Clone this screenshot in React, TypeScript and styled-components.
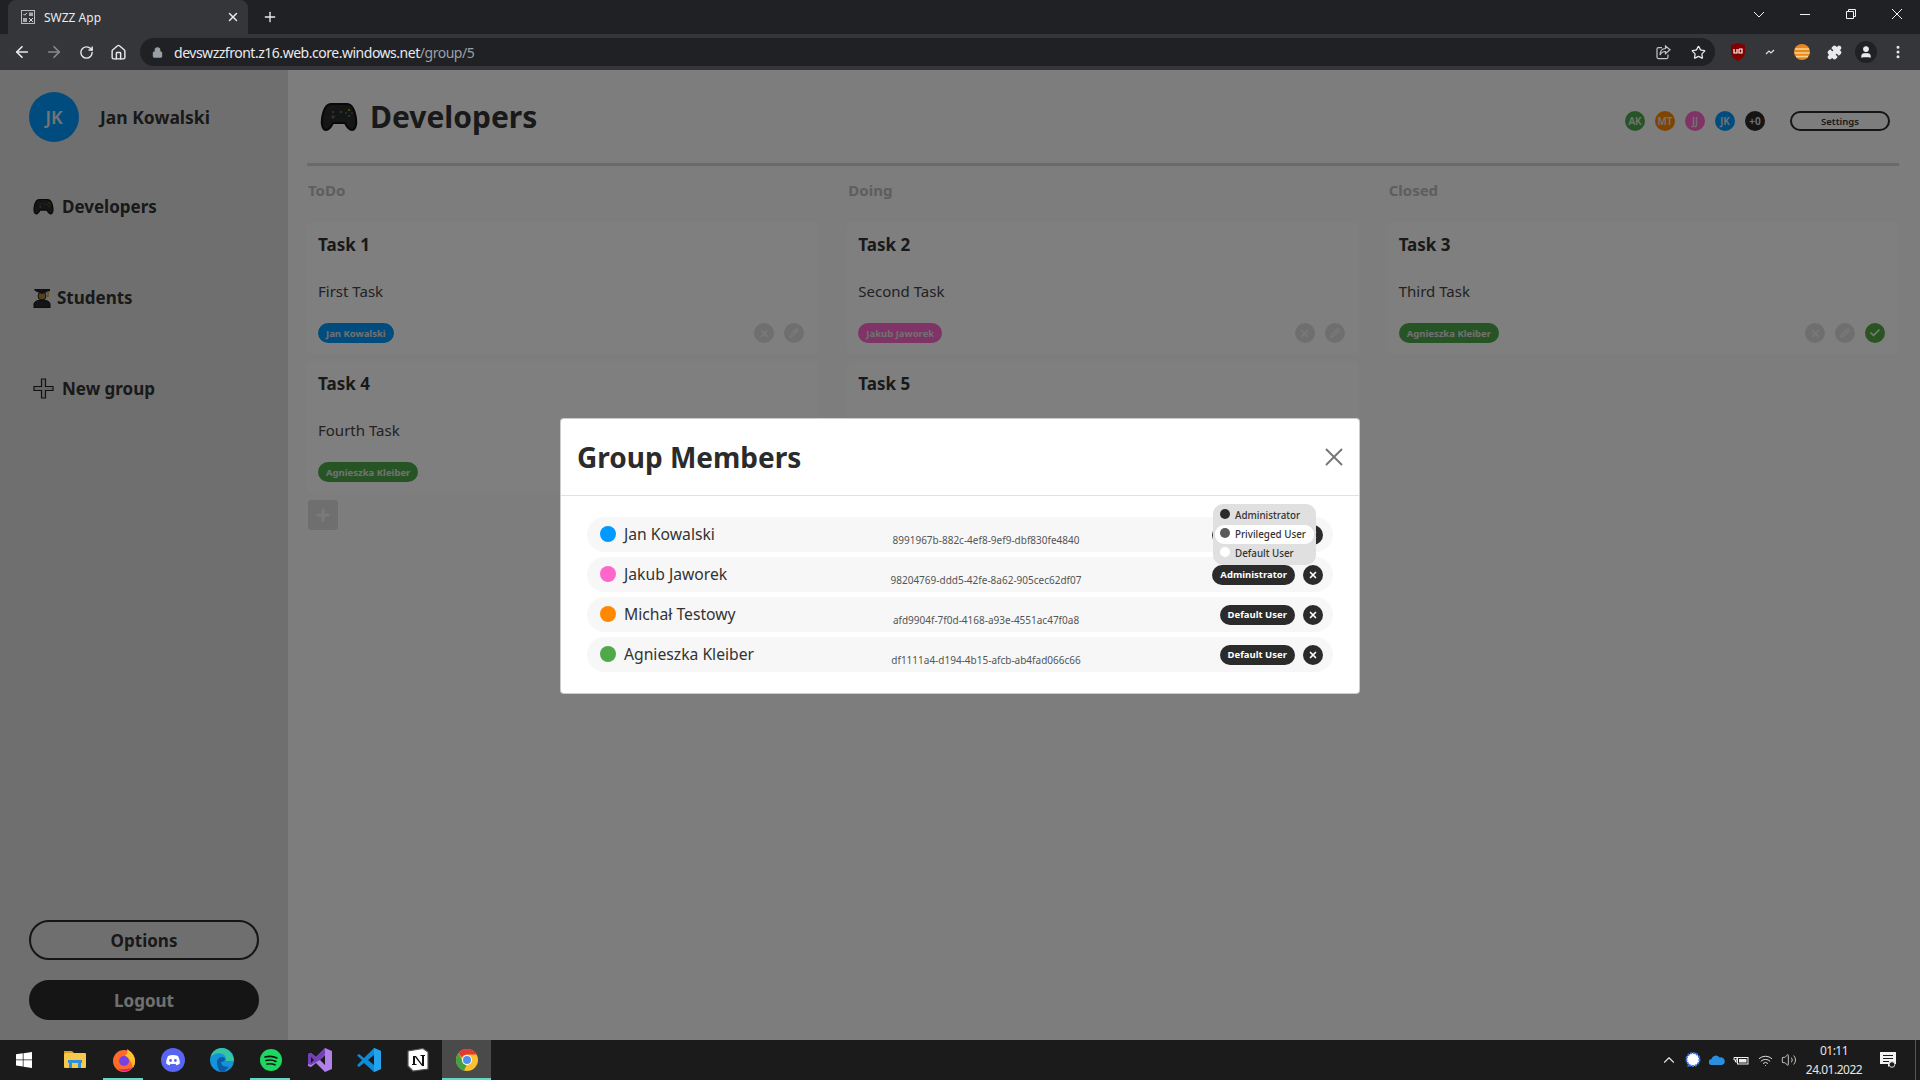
import * as React from 'react';
import styled, { createGlobalStyle } from 'styled-components';
import {
  ArrowLeft,
  ArrowRight,
  Check,
  ChevronUp,
  House,
  Lock,
  MoreVertical,
  Pencil,
  Plus,
  Puzzle,
  RotateCw,
  Star,
  User,
  Volume2,
  Wifi,
  X,
} from 'lucide-react';

const UI_FONT = `'Noto Sans', 'Open Sans', sans-serif`;

const GlobalStyle = createGlobalStyle`
  html, body {
    margin: 0;
    height: 100%;
    overflow: hidden;
  }
  body {
    font-family: ${UI_FONT};
    color: #333;
  }
  * {
    box-sizing: border-box;
  }
`;

const Screen = styled.div`
  width: 1920px;
  height: 1080px;
  display: flex;
  flex-direction: column;
`;

/* browser chrome */
const TabStrip = styled.div`
  height: 34px;
  background: #202124;
  display: flex;
  padding-left: 8px;
  color: #e8eaed;
`;

const Tab = styled.div`
  width: 240px;
  background: #35363a;
  border-radius: 8px 8px 0 0;
  display: flex;
  align-items: center;
  padding: 0 8px 0 13px;
  font-size: 12px;
  gap: 9px;
`;

const TabTitle = styled.span`
  flex: 1;
`;

const NewTab = styled.div`
  width: 44px;
  display: flex;
  align-items: center;
  justify-content: center;
`;

const WindowControls = styled.div`
  margin-left: auto;
  display: flex;
`;

const WindowButton = styled.div`
  width: 46px;
  height: 28px;
  display: flex;
  align-items: center;
  justify-content: center;
`;

const Toolbar = styled.div`
  height: 36px;
  background: #35363a;
  display: flex;
  align-items: center;
  padding: 0 6px;
  color: #e8eaed;
`;

const ToolButton = styled.div<{ $dim?: boolean }>`
  width: 32px;
  height: 32px;
  flex: none;
  display: flex;
  align-items: center;
  justify-content: center;
  color: ${props => (props.$dim ? '#8a8b8e' : '#e8eaed')};
`;

const Omnibox = styled.div`
  flex: 1;
  height: 28px;
  margin: 0 7px 0 6px;
  background: #202124;
  border-radius: 14px;
  display: flex;
  align-items: center;
  padding: 0 1px 0 12px;
  font-size: 14px;
  gap: 11px;
`;

const Url = styled.div`
  flex: 1;
  color: #e8eaed;
  letter-spacing: -0.48px;
  span {
    color: #9aa0a6;
  }
`;

const ProfileBadge = styled.div`
  width: 22px;
  height: 22px;
  border-radius: 50%;
  background: #202124;
  display: flex;
  align-items: center;
  justify-content: center;
`;

/* app */
const AppArea = styled.div`
  position: relative;
  flex: 1;
  display: flex;
  min-height: 0;
  background: #fbfbfb;
`;

const Sidebar = styled.aside`
  width: 288px;
  flex: none;
  background: #dfdfdf;
  display: flex;
  flex-direction: column;
  padding: 22px 29px 20px;
`;

const Profile = styled.div`
  display: flex;
  align-items: center;
  gap: 21px;
  font-size: 17.5px;
  font-weight: 700;
  color: #333;
  margin-bottom: 32px;
  line-height: 48px;
`;

const Avatar = styled.div`
  width: 50px;
  height: 50px;
  border-radius: 50%;
  background: #0099ff;
  color: #e8e8e8;
  font-size: 18px;
  font-weight: 600;
  display: flex;
  align-items: center;
  justify-content: center;
`;

const NavItem = styled.div<{ $gap: number }>`
  height: 91px;
  margin-left: 4px;
  padding-bottom: 26px;
  display: flex;
  align-items: center;
  gap: ${props => props.$gap}px;
  font-size: 17px;
  font-weight: 700;
  color: #333;
`;

const SideButtons = styled.div`
  margin-top: auto;
  display: flex;
  flex-direction: column;
  gap: 20px;
`;

const SideButton = styled.div<{ $solid?: boolean }>`
  height: 40px;
  border-radius: 20px;
  border: 2px solid #2b2b2b;
  background: ${props => (props.$solid ? '#2b2b2b' : 'transparent')};
  color: ${props => (props.$solid ? '#e0e0e0' : '#333')};
  font-size: 17px;
  font-weight: 700;
  display: flex;
  align-items: center;
  justify-content: center;
`;

const Main = styled.main`
  flex: 1;
  padding: 0 21px 0 19px;
`;

const Header = styled.header`
  height: 96px;
  padding: 0 9px 0 13px;
  border-bottom: 3px solid #d4d4d4;
  display: flex;
  align-items: center;
`;

const Title = styled.h1`
  margin: 0 0 0 12px;
  font-size: 30px;
  font-weight: 700;
  color: #333;
`;

const HeaderRight = styled.div`
  margin-left: auto;
  margin-top: 9px;
  display: flex;
  align-items: center;
`;

const MemberDots = styled.div`
  display: flex;
  gap: 10px;
  margin-right: 25px;
`;

const MemberDot = styled.div<{ $color: string }>`
  width: 20px;
  height: 20px;
  border-radius: 50%;
  background: ${props => props.$color};
  color: #e8e8e8;
  font-size: 10px;
  font-weight: 600;
  display: flex;
  align-items: center;
  justify-content: center;
`;

const SettingsButton = styled.div`
  width: 100px;
  height: 20px;
  border: 2px solid #2b2b2b;
  border-radius: 10px;
  font-size: 9.5px;
  font-weight: 600;
  display: flex;
  align-items: center;
  justify-content: center;
  color: #333;
`;

const Board = styled.div`
  display: grid;
  grid-template-columns: repeat(3, 1fr);
  gap: 29px;
`;

const Column = styled.section`
  display: flex;
  flex-direction: column;
  gap: 7px;
`;

const ColumnTitle = styled.div`
  height: 49px;
  margin-left: 1px;
  padding-top: 12px;
  font-size: 15px;
  font-weight: 700;
  line-height: 24px;
  color: #bcbcbc;
`;

const Card = styled.article`
  height: 132px;
  background: #ffffff;
  border-radius: 6px;
  padding: 11px 14px 11px 11px;
`;

const CardTitle = styled.div`
  font-size: 17px;
  font-weight: 700;
  line-height: 24px;
  color: #333;
`;

const CardText = styled.div`
  margin-top: 22px;
  font-size: 15px;
  line-height: 24px;
  color: #444;
`;

const CardFooter = styled.div`
  margin-top: 20px;
  display: flex;
  align-items: center;
  justify-content: space-between;
`;

const Assignee = styled.div<{ $color: string }>`
  height: 20px;
  padding: 0 8px;
  border-radius: 10px;
  background: ${props => props.$color};
  color: #e2e2e2;
  font-size: 9.5px;
  font-weight: 700;
  display: flex;
  align-items: center;
`;

const CardActions = styled.div`
  display: flex;
  gap: 10px;
`;

const RoundAction = styled.div<{ $bg?: string }>`
  width: 20px;
  height: 20px;
  border-radius: 50%;
  background: ${props => props.$bg ?? '#dedede'};
  color: #f4f4f4;
  display: flex;
  align-items: center;
  justify-content: center;
`;

const AddTask = styled.div`
  width: 30px;
  height: 30px;
  margin-left: 1px;
  border-radius: 3px;
  background: #dedede;
  color: #f4f4f4;
  display: flex;
  align-items: center;
  justify-content: center;
`;

/* modal */
const Backdrop = styled.div`
  position: absolute;
  inset: 0;
  background: rgba(0, 0, 0, 0.5);
  display: flex;
  justify-content: center;
  align-items: flex-start;
  padding-top: 348px;
`;

const Modal = styled.div`
  width: 800px;
  background: #fff;
  border: 1px solid rgba(0, 0, 0, 0.2);
  border-radius: 4px;
`;

const ModalHeader = styled.div`
  height: 77px;
  padding: 0 10px 0 16px;
  border-bottom: 1px solid #dee2e6;
  display: flex;
  align-items: center;
  justify-content: space-between;
  color: #777;
`;

const ModalTitle = styled.h2`
  margin: 0;
  font-size: 28px;
  font-weight: 700;
  color: #2b2b2b;
`;

const ModalBody = styled.div`
  padding: 21px 26px 21px;
  display: flex;
  flex-direction: column;
  gap: 5px;
`;

const MemberRow = styled.div`
  position: relative;
  height: 35px;
  border-radius: 18px;
  background: #f7f7f7;
  padding: 0 10px 0 13px;
  display: grid;
  grid-template-columns: 281px 210px 1fr;
  align-items: center;
`;

const MemberName = styled.div`
  display: flex;
  align-items: center;
  gap: 8px;
  padding-bottom: 1px;
  font-size: 15.7px;
  line-height: 22px;
  color: #333;
`;

const StatusDot = styled.span<{ $color: string }>`
  width: 16px;
  height: 16px;
  border-radius: 50%;
  background: ${props => props.$color};
`;

const MemberId = styled.div`
  padding-top: 10px;
  text-align: center;
  font-size: 10px;
  color: #555;
`;

const MemberActions = styled.div`
  display: flex;
  justify-content: flex-end;
  gap: 8px;
`;

const RoleButton = styled.div`
  height: 20px;
  padding: 0 8px;
  border-radius: 10px;
  background: #2b2b2b;
  color: #fff;
  font-size: 9.5px;
  font-weight: 700;
  display: flex;
  align-items: center;
`;

const RemoveButton = styled.div`
  width: 20px;
  height: 20px;
  border-radius: 50%;
  background: #2b2b2b;
  color: #fff;
  display: flex;
  align-items: center;
  justify-content: center;
`;

const RoleMenu = styled.div`
  position: absolute;
  z-index: 1;
  top: -13px;
  right: 17px;
  width: 103px;
  height: 61px;
  border-radius: 10px;
  background: #e0e0e0;
  padding: 2px;
  display: flex;
  flex-direction: column;
`;

const RoleOption = styled.div<{ $active?: boolean }>`
  height: 19px;
  flex: none;
  border-radius: 9px;
  background: ${props => (props.$active ? '#fff' : 'transparent')};
  display: flex;
  align-items: center;
  gap: 5px;
  padding-left: 5px;
  font-size: 9.8px;
  font-weight: 500;
  color: #333;
`;

const RoleDot = styled.span<{ $color: string }>`
  width: 10px;
  height: 10px;
  margin-top: -3px;
  border-radius: 50%;
  background: ${props => props.$color};
`;

/* taskbar */
const Taskbar = styled.footer`
  height: 40px;
  flex: none;
  background: #1b1b1b;
  display: flex;
  justify-content: space-between;
`;

const TaskIcons = styled.div`
  display: flex;
`;

const TaskTile = styled.div<{ $running?: boolean; $active?: boolean }>`
  position: relative;
  width: 49px;
  display: flex;
  align-items: center;
  justify-content: center;
  background: ${props => (props.$active ? '#4a4a4a' : 'transparent')};
  &::after {
    content: '';
    display: ${props => (props.$running ? 'block' : 'none')};
    position: absolute;
    bottom: 0;
    left: ${props => (props.$active ? '0' : '4px')};
    right: ${props => (props.$active ? '0' : '5px')};
    height: 2px;
    background: #63d8c9;
  }
`;

const StartTile = styled(TaskTile)`
  width: 50px;
  padding-right: 2px;
`;

const Tray = styled.div`
  display: flex;
  align-items: center;
  color: #e6e6e6;
`;

const TrayIcon = styled.div`
  width: 24px;
  display: flex;
  align-items: center;
  justify-content: center;
`;

const Clock = styled.div`
  width: 66px;
  text-align: center;
  font-size: 12px;
  line-height: 19px;
  color: #e6e6e6;
  letter-spacing: -0.5px;
`;

const Notifications = styled.div`
  width: 42px;
  display: flex;
  justify-content: center;
`;

const ShowDesktop = styled.div`
  width: 11px;
  height: 40px;
  border-right: 4px solid #1b1b1b;
  box-shadow: inset -1px 0 0 #555;
`;

function WindowGlyph({ d }: { d: string }) {
  return (
    <svg width="12" height="12" viewBox="0 0 12 12" fill="none" stroke="#f2f2f2" strokeWidth="1">
      <path d={d} />
    </svg>
  );
}

function ShareBox() {
  return (
    <svg width="15" height="15" viewBox="0 0 15 15" fill="none" stroke="#c4c7c5" strokeWidth="1.200">
      <path d="M6 2.600H2.500a1.500 1.500 0 0 0-1.500 1.500v8a1.500 1.500 0 0 0 1.500 1.500h8a1.500 1.500 0 0 0 1.500-1.500V9.500" />
      <path d="M9.500 1l4.500 3.800-4.500 3.800V6.500C7 6.500 5.200 7.500 4 10c0-4 2-6.300 5.500-6.500z" />
    </svg>
  );
}

function Gamepad({ size }: { size: number }) {
  return (
    <svg width={size} height={size * 0.84} viewBox="0 0 38 32">
      <path
        d="M11 3h16c5 0 7.500 5 9 14 1 6.500-.5 12-4 12-3 0-5-3-7-7H13c-2 4-4 7-7 7-3.500 0-5-5.500-4-12C3.500 8 6 3 11 3z"
        fill="#2b2b2b"
        stroke="#111"
        strokeWidth="2"
      />
      <circle cx="13" cy="11" r="1" fill="#777" />
      <circle cx="21" cy="11" r="1" fill="#777" />
      <path d="M11 16h4M13 14v4" stroke="#666" strokeWidth="1.200" />
      <circle cx="29" cy="9" r="1" fill="#d4b400" />
      <circle cx="26" cy="12" r="1" fill="#2a6fc0" />
      <circle cx="32" cy="12" r="1" fill="#b03030" />
      <circle cx="29" cy="15" r="1" fill="#3a9a3a" />
    </svg>
  );
}

function Graduate() {
  return (
    <svg width="18" height="20" viewBox="0 0 18 20">
      <path d="M1 20v-4c0-2 3-4 8-4s8 2 8 4v4z" fill="#2b2b2b" stroke="#111" />
      <circle cx="9" cy="8" r="4" fill="#b08238" stroke="#222" />
      <path d="M1 1h16v2l-8 3-7-3z" fill="#222" />
      <path d="M15 3v6" stroke="#c9a227" strokeWidth="1.500" />
    </svg>
  );
}

function OutlinePlus() {
  return (
    <svg width="21" height="21" viewBox="0 0 21 21">
      <path d="M8.500 1h4v7.500H20v4h-7.500V20h-4v-7.500H1v-4h7.500z" fill="#c8c8c8" stroke="#222" strokeWidth="1.200" />
    </svg>
  );
}

function Favicon() {
  return (
    <svg width="14" height="14" viewBox="0 0 14 14">
      <rect x="0.500" y="0.500" width="13" height="13" fill="none" stroke="#bbb" />
      <path d="M2.500 4l1.200 1.200L6 2.800" stroke="#ddd" fill="none" />
      <rect x="8" y="2.500" width="4" height="3.500" fill="#aaa" />
      <rect x="2" y="8" width="4" height="4" fill="#aaa" />
      <path d="M8 8l4 4M12 8l-4 4" stroke="#ddd" />
    </svg>
  );
}

function UBlock() {
  return (
    <svg width="16" height="18" viewBox="0 0 16 18">
      <path d="M8 0l7 2v7c0 4-3 7-7 9-4-2-7-5-7-9V2z" fill="#800000" />
      <path d="M4 6v4h3V6M9 6v4h3V6H9" stroke="#fff" strokeWidth="1.200" fill="none" />
    </svg>
  );
}

function Jupiter() {
  return (
    <svg width="16" height="16" viewBox="0 0 16 16">
      <circle cx="8" cy="8" r="8" fill="#e8881c" />
      <path d="M1 5h14M0.500 9h15M2 12.500h12" stroke="#f7d58e" strokeWidth="1.500" />
    </svg>
  );
}

function Squiggle() {
  return (
    <svg width="10" height="6" viewBox="0 0 10 6">
      <path d="M1 5l3-3 2 2 3-3" stroke="#ddd" strokeWidth="1.200" fill="none" />
    </svg>
  );
}

function WindowsLogo() {
  return (
    <svg width="16" height="16" viewBox="0 0 16 16" fill="#fff">
      <path d="M0 2.300l6.800-1v6.200H0zM7.500 1.200L16 0v7.500H7.500zM0 8.200h6.800v6.300L0 13.600zM7.500 8.200H16V16l-8.500-1.200z" />
    </svg>
  );
}

function Folder() {
  return (
    <svg width="22" height="20" viewBox="0 0 22 20">
      <path d="M0 1h8l2 2H0z" fill="#d99f22" />
      <rect x="0" y="3" width="22" height="15" rx="1" fill="#f6c84c" />
      <rect x="4" y="10" width="14" height="3" fill="#2f8fd8" />
      <rect x="5" y="13" width="3" height="5" fill="#2f8fd8" />
      <rect x="14" y="13" width="3" height="5" fill="#2f8fd8" />
    </svg>
  );
}

function Firefox() {
  return (
    <svg width="24" height="24" viewBox="0 0 24 24">
      <circle cx="12" cy="13" r="11" fill="#ff6a2b" />
      <path d="M15 1c5 3 8 7 8 12 0 3-1 5-2 7-1-6-4-10-8-12 2-2 3-4 2-7z" fill="#ffc12e" />
      <circle cx="12" cy="13" r="5" fill="#7542e5" />
      <path d="M6 21c4 3 10 3 14-1-4 1-10 2-14 1z" fill="#e31587" />
    </svg>
  );
}

function Discord() {
  return (
    <svg width="24" height="24" viewBox="0 0 24 24">
      <circle cx="12" cy="12" r="12" fill="#5865f2" />
      <path d="M7 8c3-1.500 7-1.500 10 0 1.300 2.500 2 5 1.800 7.500-1.300 1-2.500 1.500-3.500 1.700l-.8-1.400c-1.700.4-3.300.4-5 0l-.8 1.400c-1-.2-2.200-.7-3.500-1.700C5 13 5.700 10.500 7 8z" fill="#fff" />
      <circle cx="9.600" cy="12.500" r="1.400" fill="#5865f2" />
      <circle cx="14.400" cy="12.500" r="1.400" fill="#5865f2" />
    </svg>
  );
}

function Edge() {
  return (
    <svg width="24" height="24" viewBox="0 0 24 24">
      <circle cx="12" cy="12" r="12" fill="#1493d8" />
      <path d="M24 13C24 6 18 0 12 0 6 0 1.500 4 1 9c3-4 9-5 13-2 2 1.500 2.500 4 2 6h8z" fill="#36c5a0" />
      <path d="M7 14c0-3 2.500-5 5-5 2 0 3 1 3 2.500S13 14 11 14c0 3 3 5.500 8 4.500C17 22 14 24 11 24 8 22 7 18 7 14z" fill="#0c5aa6" />
    </svg>
  );
}

function Spotify() {
  return (
    <svg width="22" height="22" viewBox="0 0 22 22">
      <circle cx="11" cy="11" r="11" fill="#1ed760" />
      <path d="M5 8c4-1 8-1 12 1M6 11.500c3.500-.8 7-.5 10 1M7 15c2.500-.5 5.500-.3 8 .8" stroke="#111" strokeWidth="1.600" fill="none" strokeLinecap="round" />
    </svg>
  );
}

function VisualStudio() {
  return (
    <svg width="24" height="24" viewBox="0 0 24 24">
      <path d="M17 0l7 3v18l-7 3-9-9-5 4-3-1V6l3-1 5 4z" fill="#b180ea" />
      <path d="M0 6l3-1 5 4 9-9v6l-5 6-9 5-3-1z" fill="#6b3ab0" opacity="0.900" />
      <path d="M3 9v6l3-3z" fill="#1b1b1b" />
      <path d="M17 7l-5 5 5 5z" fill="#1b1b1b" />
    </svg>
  );
}

function VsCode() {
  return (
    <svg width="24" height="24" viewBox="0 0 24 24">
      <path d="M17 0l7 3v18l-7 3-10-9-5 4-2-1.500L5 12 0 7.500 2 6l5 4z" fill="#0f8bd6" />
      <path d="M17 7l-6 5 6 5z" fill="#1b1b1b" />
      <path d="M17 0l7 3v18l-7 3z" fill="#26a3ee" />
    </svg>
  );
}

function Notion() {
  return (
    <svg width="22" height="24" viewBox="0 0 22 24">
      <path d="M1 3l15-2.500L21 4v17L6 23l-5-5z" fill="#fff" stroke="#555" strokeWidth="1.200" />
      <path d="M6 8h3l6 8V8h-1.500V7H18v1h-1v10h-2l-7-9v7h1.500v1H5v-1h1z" fill="#111" />
    </svg>
  );
}

function Chrome() {
  return (
    <svg width="22" height="22" viewBox="0 0 22 22">
      <circle cx="11" cy="11" r="11" fill="#fbc02d" />
      <path d="M11 0a11 11 0 0 1 9.500 5.500H11a5.500 5.500 0 0 0-5 3.200L2.500 4A11 11 0 0 1 11 0z" fill="#e53935" />
      <path d="M2.500 4L6.500 12a5.500 5.500 0 0 0 4 4.400L8 21.600A11 11 0 0 1 2.500 4z" fill="#43a047" />
      <circle cx="11" cy="11" r="5" fill="#fff" />
      <circle cx="11" cy="11" r="4" fill="#4f8ff0" />
    </svg>
  );
}

function Signal() {
  return (
    <svg width="16" height="16" viewBox="0 0 16 16">
      <circle cx="8" cy="7.500" r="6.500" fill="#fff" stroke="#3a76f0" strokeWidth="2" strokeDasharray="2 1" />
      <path d="M2 15l1.500-3 2 2z" fill="#3a76f0" />
    </svg>
  );
}

function OneDrive() {
  return (
    <svg width="16" height="10" viewBox="0 0 16 10">
      <path d="M3 10a3 3 0 0 1-.500-6A4.500 4.500 0 0 1 10.500 2.500 3.500 3.500 0 0 1 13 10z" fill="#2a8fe0" />
    </svg>
  );
}

function Battery() {
  return (
    <svg width="16" height="12" viewBox="0 0 16 12">
      <rect x="4.500" y="3.500" width="10.500" height="6.500" fill="none" stroke="#eee" />
      <rect x="6" y="5" width="7.500" height="3.500" fill="#eee" />
      <path d="M1 3.500h3v2.500H1zM2.500 6v2h2" fill="none" stroke="#eee" />
    </svg>
  );
}

function ActionCenter() {
  return (
    <svg width="18" height="18" viewBox="0 0 18 18">
      <path d="M1 1h16v12h-5l-3 3v-3H1z" fill="#f2f2f2" />
      <path d="M4 4.500h10M4 7.500h10M4 10.500h6" stroke="#1b1b1b" />
      <circle cx="13" cy="13.500" r="2.800" fill="#1b1b1b" stroke="#ddd" />
    </svg>
  );
}

const MEMBER_DOTS = [
  { label: 'AK', color: '#4fa84a' },
  { label: 'MT', color: '#ff8800' },
  { label: 'JJ', color: '#ff66cc' },
  { label: 'JK', color: '#0099ff' },
  { label: '+0', color: '#2b2b2b' },
];

const COLUMNS = [
  {
    title: 'ToDo',
    tasks: [
      { name: 'Task 1', text: 'First Task', who: 'Jan Kowalski', color: '#0099ff' },
      { name: 'Task 4', text: 'Fourth Task', who: 'Agnieszka Kleiber', color: '#4fa84a' },
    ],
    canAdd: true,
  },
  {
    title: 'Doing',
    tasks: [
      { name: 'Task 2', text: 'Second Task', who: 'Jakub Jaworek', color: '#ff66cc' },
      { name: 'Task 5', text: 'Fifth Task', who: 'Jakub Jaworek', color: '#ff66cc' },
    ],
  },
  {
    title: 'Closed',
    tasks: [
      { name: 'Task 3', text: 'Third Task', who: 'Agnieszka Kleiber', color: '#4fa84a', done: true },
    ],
  },
];

const MEMBERS = [
  { name: 'Jan Kowalski', id: '8991967b-882c-4ef8-9ef9-dbf830fe4840', color: '#0099ff', role: 'Administrator' },
  { name: 'Jakub Jaworek', id: '98204769-ddd5-42fe-8a62-905cec62df07', color: '#ff66cc', role: 'Administrator' },
  { name: 'Michał Testowy', id: 'afd9904f-7f0d-4168-a93e-4551ac47f0a8', color: '#ff8800', role: 'Default User' },
  { name: 'Agnieszka Kleiber', id: 'df1111a4-d194-4b15-afcb-ab4fad066c66', color: '#4fa84a', role: 'Default User' },
];

const ROLES = [
  { label: 'Administrator', color: '#2b2b2b' },
  { label: 'Privileged User', color: '#5a5a5a', active: true },
  { label: 'Default User', color: '#ffffff' },
];

export default function App() {
  return (
    <Screen>
      <GlobalStyle />
      <TabStrip>
        <Tab>
          <Favicon />
          <TabTitle>SWZZ App</TabTitle>
          <X size={14} strokeWidth={2.5} />
        </Tab>
        <NewTab>
          <Plus size={16} strokeWidth={2} />
        </NewTab>
        <WindowControls>
          <WindowButton>
            <WindowGlyph d="M1 4l5 5 5-5" />
          </WindowButton>
          <WindowButton>
            <WindowGlyph d="M1 6.500h10" />
          </WindowButton>
          <WindowButton>
            <WindowGlyph d="M1.500 3.500h7v7h-7zM3.500 3.500v-2h7v7h-2" />
          </WindowButton>
          <WindowButton>
            <WindowGlyph d="M1 1l10 10M11 1L1 11" />
          </WindowButton>
        </WindowControls>
      </TabStrip>
      <Toolbar>
        <ToolButton>
          <ArrowLeft size={18} strokeWidth={2.25} />
        </ToolButton>
        <ToolButton $dim>
          <ArrowRight size={18} strokeWidth={2.25} />
        </ToolButton>
        <ToolButton>
          <RotateCw size={15} strokeWidth={2.25} />
        </ToolButton>
        <ToolButton>
          <House size={17} strokeWidth={2} />
        </ToolButton>
        <Omnibox>
          <Lock size={11} strokeWidth={2.5} color="#9aa0a6" fill="#9aa0a6" />
          <Url>
            devswzzfront.z16.web.core.windows.net<span>/group/5</span>
          </Url>
          <ShareBox />
          <ToolButton>
            <Star size={15} strokeWidth={2} />
          </ToolButton>
        </Omnibox>
        <ToolButton>
          <UBlock />
        </ToolButton>
        <ToolButton>
          <Squiggle />
        </ToolButton>
        <ToolButton>
          <Jupiter />
        </ToolButton>
        <ToolButton>
          <Puzzle size={15} fill="#e8eaed" />
        </ToolButton>
        <ToolButton>
          <ProfileBadge>
            <User size={14} fill="#e8eaed" />
          </ProfileBadge>
        </ToolButton>
        <ToolButton>
          <MoreVertical size={16} strokeWidth={2.5} />
        </ToolButton>
      </Toolbar>

      <AppArea>
        <Sidebar>
          <Profile>
            <Avatar>JK</Avatar>
            Jan Kowalski
          </Profile>
          <NavItem $gap={8}>
            <Gamepad size={21} />
            Developers
          </NavItem>
          <NavItem $gap={6}>
            <Graduate />
            Students
          </NavItem>
          <NavItem $gap={8}>
            <OutlinePlus />
            New group
          </NavItem>
          <SideButtons>
            <SideButton>Options</SideButton>
            <SideButton $solid>Logout</SideButton>
          </SideButtons>
        </Sidebar>
        <Main>
          <Header>
            <Gamepad size={38} />
            <Title>Developers</Title>
            <HeaderRight>
              <MemberDots>
                {MEMBER_DOTS.map(dot => (
                  <MemberDot key={dot.label} $color={dot.color}>
                    {dot.label}
                  </MemberDot>
                ))}
              </MemberDots>
              <SettingsButton>Settings</SettingsButton>
            </HeaderRight>
          </Header>
          <Board>
            {COLUMNS.map(column => (
              <Column key={column.title}>
                <ColumnTitle>{column.title}</ColumnTitle>
                {column.tasks.map(task => (
                  <Card key={task.name}>
                    <CardTitle>{task.name}</CardTitle>
                    <CardText>{task.text}</CardText>
                    <CardFooter>
                      <Assignee $color={task.color}>{task.who}</Assignee>
                      <CardActions>
                        <RoundAction>
                          <X size={11} strokeWidth={3.5} />
                        </RoundAction>
                        <RoundAction>
                          <Pencil size={10} strokeWidth={3} />
                        </RoundAction>
                        {'done' in task && task.done && (
                          <RoundAction $bg="#55a845">
                            <Check size={12} strokeWidth={3.5} />
                          </RoundAction>
                        )}
                      </CardActions>
                    </CardFooter>
                  </Card>
                ))}
                {column.canAdd && (
                  <AddTask>
                    <Plus size={18} strokeWidth={4} />
                  </AddTask>
                )}
              </Column>
            ))}
          </Board>
        </Main>

        <Backdrop>
          <Modal>
            <ModalHeader>
              <ModalTitle>Group Members</ModalTitle>
              <X size={30} strokeWidth={1.5} />
            </ModalHeader>
            <ModalBody>
              {MEMBERS.map((member, index) => (
                <MemberRow key={member.id}>
                  <MemberName>
                    <StatusDot $color={member.color} />
                    {member.name}
                  </MemberName>
                  <MemberId>{member.id}</MemberId>
                  <MemberActions>
                    <RoleButton>{member.role}</RoleButton>
                    <RemoveButton>
                      <X size={10} strokeWidth={4} />
                    </RemoveButton>
                  </MemberActions>
                  {index === 0 && (
                    <RoleMenu>
                      {ROLES.map(role => (
                        <RoleOption key={role.label} $active={role.active}>
                          <RoleDot $color={role.color} />
                          {role.label}
                        </RoleOption>
                      ))}
                    </RoleMenu>
                  )}
                </MemberRow>
              ))}
            </ModalBody>
          </Modal>
        </Backdrop>
      </AppArea>

      <Taskbar>
        <TaskIcons>
          <StartTile>
            <WindowsLogo />
          </StartTile>
          <TaskTile>
            <Folder />
          </TaskTile>
          <TaskTile $running>
            <Firefox />
          </TaskTile>
          <TaskTile>
            <Discord />
          </TaskTile>
          <TaskTile>
            <Edge />
          </TaskTile>
          <TaskTile $running>
            <Spotify />
          </TaskTile>
          <TaskTile>
            <VisualStudio />
          </TaskTile>
          <TaskTile>
            <VsCode />
          </TaskTile>
          <TaskTile>
            <Notion />
          </TaskTile>
          <TaskTile $running $active>
            <Chrome />
          </TaskTile>
        </TaskIcons>
        <Tray>
          <TrayIcon>
            <ChevronUp size={18} strokeWidth={1.5} />
          </TrayIcon>
          <TrayIcon>
            <Signal />
          </TrayIcon>
          <TrayIcon>
            <OneDrive />
          </TrayIcon>
          <TrayIcon>
            <Battery />
          </TrayIcon>
          <TrayIcon>
            <Wifi size={15} strokeWidth={1.5} />
          </TrayIcon>
          <TrayIcon>
            <Volume2 size={16} strokeWidth={1.25} />
          </TrayIcon>
          <Clock>
            01:11
            <br />
            24.01.2022
          </Clock>
          <Notifications>
            <ActionCenter />
          </Notifications>
          <ShowDesktop />
        </Tray>
      </Taskbar>
    </Screen>
  );
}
